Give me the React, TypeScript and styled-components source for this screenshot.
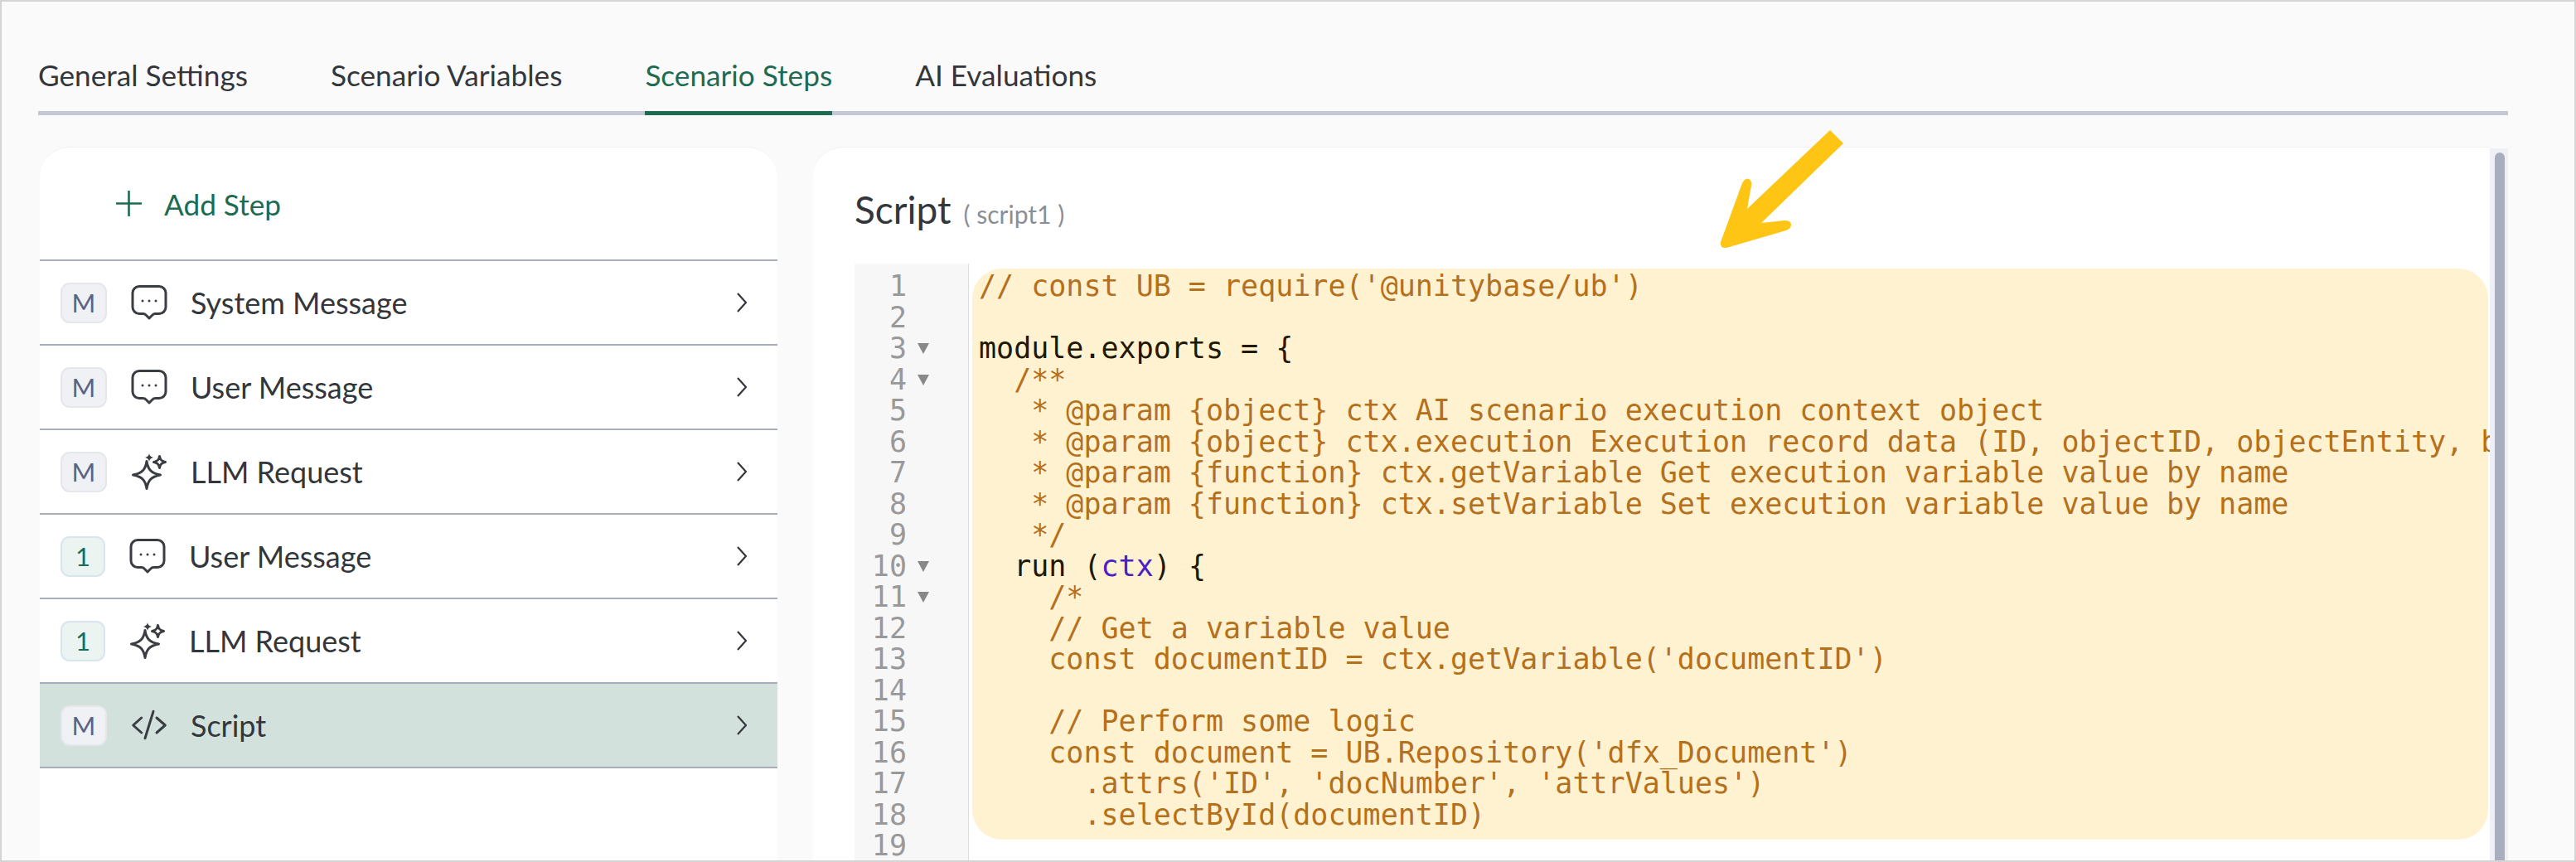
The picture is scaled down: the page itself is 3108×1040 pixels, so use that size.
import React from "react";
import styled, { createGlobalStyle } from "styled-components";

const GREEN = "#1d6b50";
const INK = "#33363b";

const GlobalStyle = createGlobalStyle`
  html, body {
    margin: 0;
    padding: 0;
    background: #fafafa;
  }
`;

const Frame = styled.div`
  box-sizing: border-box;
  position: relative;
  width: 3108px;
  height: 1040px;
  overflow: hidden;
  display: flex;
  flex-direction: column;
  padding-left: 44px;
  padding-right: 80px;
  background: #fafafa;
  border: 2px solid #d4d4d4;
  font-family: Lato, sans-serif;
`;

const TabBar = styled.div`
  display: flex;
  flex: none;
  gap: 100px;
  height: 132px;
  align-items: flex-end;
  border-bottom: 5px solid #c5c7d6;
`;

const Tab = styled.div<{ $active?: boolean }>`
  padding-bottom: 24px;
  margin-bottom: -5px;
  font-size: 35.2px;
  line-height: 40px;
  color: ${(p) => (p.$active ? GREEN : INK)};
  border-bottom: 5px solid ${(p) => (p.$active ? GREEN : "transparent")};
`;

const Main = styled.div`
  display: flex;
  flex: 1;
  min-height: 0;
  margin-top: 38px;
  margin-left: 2px;
`;

const StepCard = styled.div`
  box-sizing: border-box;
  flex: none;
  width: 890px;
  background: #fff;
  border-top: 1px solid #f0f0f0;
  border-radius: 36px 36px 0 0;
  overflow: hidden;
`;

const AddBar = styled.div`
  display: flex;
  align-items: center;
  gap: 27px;
  height: 135px;
  padding-left: 92px;
  font-size: 35.2px;
  color: ${GREEN};
  border-bottom: 2px solid #a9adc0;
`;

const StepRow = styled.div<{ $selected?: boolean }>`
  display: flex;
  align-items: center;
  height: 100px;
  padding: 0 37px 0 25px;
  font-size: 36px;
  color: ${INK};
  background: ${(p) => (p.$selected ? "#d2e1dc" : "#fff")};
  border-bottom: 2px solid #a9adc0;
`;

const Badge = styled.div<{ $auto?: boolean }>`
  box-sizing: border-box;
  flex: none;
  display: flex;
  align-items: center;
  justify-content: center;
  width: ${(p) => (p.$auto ? 54 : 56)}px;
  height: 49px;
  margin-right: 29px;
  font-size: 31px;
  border-radius: 11px;
  color: ${(p) => (p.$auto ? GREEN : "#5d6480")};
  background: ${(p) => (p.$auto ? "#ecf4f2" : "#eff1f4")};
  border: 2px solid ${(p) => (p.$auto ? "#d8e5f1" : "#e5e7ea")};
`;

const StepIcon = styled.svg`
  flex: none;
  width: 44px;
  height: 44px;
  margin-right: 28px;
  fill: none;
  stroke: #3a3d42;
  stroke-width: 3;
  stroke-linecap: round;
  stroke-linejoin: round;
`;

const Chevron = styled.svg`
  flex: none;
  width: 12px;
  height: 24px;
  margin-left: auto;
  fill: none;
  stroke: ${INK};
  stroke-width: 2.2;
`;

const ScriptCard = styled.div`
  box-sizing: border-box;
  flex: 1;
  min-width: 0;
  margin-left: 43px;
  padding: 50px 0 0 50px;
  background: #fff;
  border-top: 1px solid #f0f0f0;
  border-radius: 36px 0 0 0;
  overflow: hidden;
`;

const TitleRow = styled.div`
  display: flex;
  align-items: baseline;
  gap: 15px;
  height: 50px;
  line-height: 50px;
  margin-bottom: 40px;
`;

const Title = styled.span`
  font-size: 46px;
  color: ${INK};
`;

const Subtitle = styled.span`
  font-size: 30px;
  color: #8b8e94;
`;

const Editor = styled.div`
  display: flex;
  height: 760px;
  font-family: "DejaVu Sans Mono", monospace;
  font-size: 35px;
  line-height: 37.5px;
`;

const Gutter = styled.div`
  box-sizing: border-box;
  flex: none;
  width: 138px;
  padding-top: 9px;
  background: #f7f7f7;
  border-right: 1px solid #dcdcdc;
  color: #999;
`;

const GutterLine = styled.div`
  display: flex;
  align-items: center;
  height: 37.5px;
`;

const LineNumber = styled.span`
  width: 63px;
  text-align: right;
`;

const FoldMark = styled.span`
  width: 0;
  height: 0;
  margin-left: 13px;
  border-left: 7px solid transparent;
  border-right: 7px solid transparent;
  border-top: 13px solid #888;
`;

const CodeArea = styled.div`
  position: relative;
  flex: 1;
  min-width: 0;
  padding: 9px 0 0 12px;
  overflow: hidden;
  color: #221700;
`;

const Highlight = styled.div`
  position: absolute;
  top: 6px;
  left: 4px;
  right: 2px;
  height: 689px;
  background: #fff2d1;
  border-radius: 36px;
`;

const CodeLine = styled.div`
  position: relative;
  height: 37.5px;
  white-space: pre;
`;

const Comment = styled.span`
  color: #b5701c;
`;

const Param = styled.span`
  color: #4b1fc2;
`;

const ScrollTrack = styled.div`
  flex: none;
  width: 22px;
  margin-top: 2px;
  padding: 5px 4px 0 6px;
  box-sizing: border-box;
  background: #eef0f5;
`;

const ScrollThumb = styled.div`
  height: 100%;
  background: #a9aebf;
  border-radius: 6px 6px 0 0;
`;

const CalloutArrow = styled.svg`
  position: absolute;
  left: 2038px;
  top: 138px;
  width: 240px;
  height: 180px;
  fill: #fec514;
`;

const BubbleIcon = () => (
  <StepIcon viewBox="0 0 44 44">
    <path d="M10 2.5h24a8 8 0 0 1 8 8v17a8 8 0 0 1-8 8h-4.5c-1.5 0-2.8.6-3.8 1.7L22 41l-3.7-3.8c-1-1.1-2.3-1.7-3.8-1.7H10a8 8 0 0 1-8-8v-17a8 8 0 0 1 8-8z" />
    <g fill="#3a3d42" stroke="none">
      <circle cx="14" cy="20" r="1.5" />
      <circle cx="22" cy="20" r="1.5" />
      <circle cx="30" cy="20" r="1.5" />
    </g>
  </StepIcon>
);

const SparkIcon = () => (
  <StepIcon viewBox="0 0 44 44">
    <path d="M19 9.5c1.5 10 5.5 14.5 16.500 16.500-11 2-15 6.500-16.500 16.500-1.500-10-5.500-14.500-16.500-16.500 11-2 15-6.500 16.500-16.500z" />
    <path d="M34.500 3.500c.8 4.500 2.500 6 7 7-4.500 1-6.200 2.500-7 7-.8-4.500-2.500-6-7-7 4.500-1 6.200-2.500 7-7z" />
    <path
      d="M22 0c.6 3 1.800 4.200 5 5-3.200.8-4.400 2-5 5-.6-3-1.800-4.200-5-5 3.200-.8 4.400-2 5-5z"
      fill="#3a3d42"
      stroke="none"
    />
  </StepIcon>
);

const CodeIcon = () => (
  <StepIcon viewBox="0 0 44 44">
    <path d="M12.700 13 2.700 22l10 9M27 5.300 17 37.700M31 13l10.300 9L31 31" />
  </StepIcon>
);

const STEPS = [
  { badge: "M", icon: <BubbleIcon />, label: "System Message" },
  { badge: "M", icon: <BubbleIcon />, label: "User Message" },
  { badge: "M", icon: <SparkIcon />, label: "LLM Request" },
  { badge: "1", icon: <BubbleIcon />, label: "User Message" },
  { badge: "1", icon: <SparkIcon />, label: "LLM Request" },
  { badge: "M", icon: <CodeIcon />, label: "Script", selected: true },
];

const FOLDS = [3, 4, 10, 11];

const CODE: React.ReactNode[] = [
  <Comment>// const UB = require('@unitybase/ub')</Comment>,
  "",
  "module.exports = {",
  <Comment>{"  /**"}</Comment>,
  <Comment>{"   * @param {object} ctx AI scenario execution context object"}</Comment>,
  <Comment>
    {"   * @param {object} ctx.execution Execution record data (ID, objectID, objectEntity, b"}
  </Comment>,
  <Comment>{"   * @param {function} ctx.getVariable Get execution variable value by name"}</Comment>,
  <Comment>{"   * @param {function} ctx.setVariable Set execution variable value by name"}</Comment>,
  <Comment>{"   */"}</Comment>,
  <>
    {"  run ("}
    <Param>ctx</Param>
    {") {"}
  </>,
  <Comment>{"    /*"}</Comment>,
  <Comment>{"    // Get a variable value"}</Comment>,
  <Comment>{"    const documentID = ctx.getVariable('documentID')"}</Comment>,
  "",
  <Comment>{"    // Perform some logic"}</Comment>,
  <Comment>{"    const document = UB.Repository('dfx_Document')"}</Comment>,
  <Comment>{"      .attrs('ID', 'docNumber', 'attrValues')"}</Comment>,
  <Comment>{"      .selectById(documentID)"}</Comment>,
  "",
];

export default function App() {
  return (
    <Frame>
      <GlobalStyle />
      <TabBar>
        <Tab>General Settings</Tab>
        <Tab>Scenario Variables</Tab>
        <Tab $active>Scenario Steps</Tab>
        <Tab>AI Evaluations</Tab>
      </TabBar>
      <Main>
        <StepCard>
          <AddBar>
            <svg width="31" height="31" viewBox="0 0 31 31" stroke={GREEN} strokeWidth="2.600">
              <path d="M15.500 0v31M0 15.500h31" />
            </svg>
            Add Step
          </AddBar>
          {STEPS.map((step, i) => (
            <StepRow key={i} $selected={step.selected}>
              <Badge $auto={step.badge === "1"}>{step.badge}</Badge>
              {step.icon}
              {step.label}
              <Chevron viewBox="0 0 12 24">
                <path d="M1 1l10 11L1 23" />
              </Chevron>
            </StepRow>
          ))}
        </StepCard>
        <ScriptCard>
          <TitleRow>
            <Title>Script</Title>
            <Subtitle>( script1 )</Subtitle>
          </TitleRow>
          <Editor>
            <Gutter>
              {CODE.map((_, i) => (
                <GutterLine key={i}>
                  <LineNumber>{i + 1}</LineNumber>
                  {FOLDS.includes(i + 1) && <FoldMark />}
                </GutterLine>
              ))}
            </Gutter>
            <CodeArea>
              <Highlight />
              {CODE.map((line, i) => (
                <CodeLine key={i}>{line}</CodeLine>
              ))}
            </CodeArea>
          </Editor>
        </ScriptCard>
        <ScrollTrack>
          <ScrollThumb />
        </ScrollTrack>
      </Main>
      <CalloutArrow viewBox="0 0 240 180">
        <path d="M168 17 184 33 85 129 113 126Q121 126 121 131 121 136 115 138L43 159Q35 160 36 152L62 81Q65 75 70 76 74 78 73 84L68 112Z" />
      </CalloutArrow>
    </Frame>
  );
}
